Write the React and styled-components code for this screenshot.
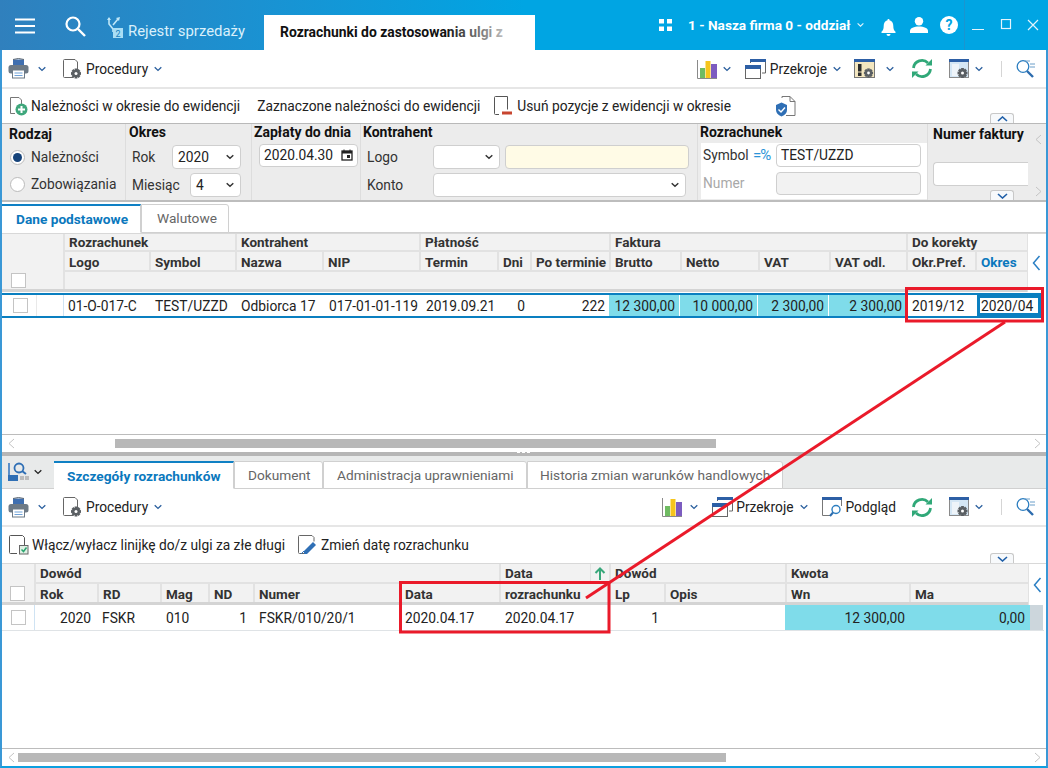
import React from 'react';
import styled, { createGlobalStyle } from 'styled-components';

const Global = createGlobalStyle`
  html, body { margin: 0; padding: 0; background: #fff; }
  body { font-family: Roboto, "Liberation Sans", sans-serif; font-size: 13.75px; color: #222; overflow: hidden; }
  * { box-sizing: border-box; }
`;

const Page = styled.div`
  position: relative; width: 1048px; height: 768px; overflow: hidden; background: #fff;
  display: flex; flex-direction: column;
`;
const TitleBar = styled.header`
  height: 50px; flex: none; display: flex; align-items: flex-end; color: #fff;
  background: linear-gradient(90deg, #3080bd 0%, #1a92d2 25%, #00a5e3 50%, #00a5e3 100%);
`;
const TitleIcon = styled.div`
  height: 50px; display: flex; align-items: center; flex: none;
  margin-left: ${p => p.$ml}px; padding-top: ${p => p.$pt ?? 2}px;
`;
const ModuleName = styled.span`
  height: 50px; width: 117px; flex: none; line-height: 62px; margin-left: 5px; font-size: 14.9px; color: #d9f0fb; white-space: nowrap;
`;
const ActiveTab = styled.div`
  width: 271px; height: 35px; margin-left: 19px; background: #fff; color: #111; font-weight: 700; flex: none;
  padding: 9px 0 0 16px; white-space: nowrap; overflow: hidden; font-size: 13.9px; position: relative;
  &::after { content: ''; position: absolute; right: 0; top: 0; bottom: 0; width: 90px;
    background: linear-gradient(90deg, rgba(255,255,255,0), #fff 90%); }
`;
const Firm = styled.span`
  height: 50px; line-height: 50px; margin-left: 16px; font-weight: 700; font-size: 13.65px; white-space: nowrap; width: 163px; flex: none;
`;
const WinDivider = styled.div`
  width: 1px; height: 50px; background: #1b95cf; margin-left: 6px; flex: none;
`;

const Body = styled.div`
  flex: 1; min-height: 0; display: flex; flex-direction: column;
  border-left: 2px solid #3a98d6; border-right: 2px solid #3a98d6; border-bottom: 2px solid #0ea0e0;
`;
const Toolbar = styled.div`
  height: ${p => p.$h}px; flex: none; display: flex; align-items: center; position: relative;
  padding-left: ${p => p.$pl ?? 6}px; border-bottom: ${p => p.$border ? '2px solid #e6e6e6' : 'none'};
`;
const Tool = styled.div`
  display: flex; align-items: center; flex: none; white-space: nowrap; gap: ${p => p.$gap ?? 4}px;
  margin-left: ${p => p.$ml ?? 0}px; color: #222; font-size: 13.75px;
`;
const Spacer = styled.div` flex: 1; `;
const TrailGap = styled.div` width: 10px; flex: none; `;
const ToolDivider = styled.div` width: 1px; height: 16px; background: #d5d5d5; margin-left: 18px; flex: none; `;
const Collapse = styled.div`
  position: absolute; left: 988px; bottom: 0;
  width: 24px; height: 10px; background: #f7f9fb; border: 1px solid #c8c8c8; border-bottom: none; border-radius: 3px 3px 0 0;
  display: flex; align-items: center; justify-content: center; z-index: 2;
`;

const Filters = styled.section`
  height: 79px; flex: none; background: #ececec; display: flex; position: relative;
  border-top: 1px solid #b9b9b9; border-bottom: 2px solid #bdbdbd;
`;
const FilterGroup = styled.div`
  width: ${p => p.$w}px; flex: none; position: relative; padding-left: ${p => p.$pl ?? 3}px;
  border-right: ${p => p.$last ? 'none' : '1px solid #dddddd'}; height: 76px;
`;
const GroupTitle = styled.div`
  font-weight: 700; font-size: 14px; color: #111; height: 17px; line-height: 17px; margin-top: ${p => p.$mt ?? 0}px; white-space: nowrap;
`;
const FormRow = styled.div`
  display: flex; align-items: center; height: 24px; margin-top: ${p => p.$mt ?? 0}px; padding-left: ${p => p.$pl ?? 0}px; white-space: nowrap;
  color: ${p => p.$dim ? '#a8a8a8' : '#333'};
`;
const RowLabel = styled.span` width: ${p => p.$w}px; flex: none; `;
const Radio = styled.span`
  width: 15px; height: 15px; border-radius: 50%; border: 1px solid #bbb; background: #fff; flex: none; margin-right: 6px; display: flex; align-items: center; justify-content: center;
  &::after { content: ''; width: 9px; height: 9px; border-radius: 50%; background: ${p => p.$on ? '#16437a' : 'transparent'}; }
`;
const Select = styled.div`
  width: ${p => p.$w}px; height: 24px; flex: none; background: #fff; border: 1px solid #cfcfcf; border-radius: 4px;
  padding: 0 6px 0 5px; display: flex; align-items: center; justify-content: space-between; color: #222; margin-left: ${p => p.$ml ?? 0}px;
`;
const Input = styled.div`
  width: ${p => p.$w}px; height: ${p => p.$h ?? 24}px; flex: none; background: ${p => p.$bg || '#fff'}; border: 1px solid #cfcfcf; border-radius: 4px;
  padding: 0 4px; display: flex; align-items: center; justify-content: space-between; color: #222; margin-left: ${p => p.$ml ?? 0}px;
  ${p => p.$open && 'border-right: none; border-radius: 4px 0 0 4px;'}
`;
const SymbolPanel = styled.div`
  background: #fff; width: 226px; height: 56px; margin-left: 1px; margin-top: 2px; padding-left: 2px;
`;
const PercentMark = styled.span`
  color: #2b94d8; font-size: 15px; width: 23px; margin-left: 3px; letter-spacing: -1px; flex: none;
`;
const SideArrows = styled.div`
  flex: 1; display: flex; flex-direction: column; justify-content: space-between; align-items: center; padding: 10px 0 3px 2px; background: #ececec;
`;

const TabStrip = styled.div`
  height: ${p => p.$h}px; flex: none; display: flex; align-items: flex-end; background: ${p => p.$bg || '#fff'};
  border-bottom: 1px solid #d0d0d0;
`;
const TabItem = styled.div`
  width: ${p => p.$w}px; flex: none; height: ${p => p.$hh ?? 29}px; margin-bottom: -1px; background: #fff; border: 1px solid #d0d0d0; border-left: ${p => p.$active ? 'none' : '1px solid #d0d0d0'};
  border-top: ${p => p.$active ? '2px solid #0f80c4' : '1px solid #d0d0d0'};
  border-bottom: ${p => p.$active ? '1px solid #fff' : '1px solid #d0d0d0'}; border-radius: ${p => p.$active ? '0' : '0 3px 0 0'};
  font-size: 13.7px; padding-left: ${p => p.$pl}px; line-height: 26px; white-space: nowrap;
  color: ${p => p.$active ? '#0a78bd' : '#666'}; font-weight: ${p => p.$active ? 700 : 400};
`;
const ViewPicker = styled.div`
  width: 52px; height: 28px; flex: none; align-self: center; display: flex; align-items: center; gap: 4px; padding-left: 6px;
`;

const Grid = styled.div` display: flex; flex: none; border-top: 1px solid #d8d8d8; `;
const GridMain = styled.div` width: ${p => p.$w}px; flex: none; background: #f2f2f2; `;
const GridSide = styled.div`
  flex: 1; border-left: 1px solid #e2e2e2; display: flex; align-items: center; justify-content: center; padding-right: 1px;
`;
const HeadRow = styled.div`
  display: grid; grid-template-columns: ${p => p.$cols}; height: ${p => p.$h}px;
  ${p => p.$thick && 'border-bottom: 3px solid #d4d4d4;'}
`;
const HeadCell = styled.div`
  grid-column: ${p => p.$span ? `span ${p.$span}` : 'auto'};
  border-left: ${p => p.$blank ? 'none' : '2px solid #e2e2e2'};
  border-bottom: ${p => p.$flat ? 'none' : '2px solid #e2e2e2'};
  padding-left: ${p => p.$pl ?? 4}px; padding-top: ${p => p.$pt ?? 0}px; font-weight: 700; font-size: 13.5px;
  color: ${p => p.$blue ? '#0a78bd' : '#333'}; white-space: nowrap; overflow: hidden; display: flex; align-items: center; justify-content: space-between;
`;
const ColHead = styled(HeadCell).attrs({ $pt: 2 })``;
const ColHeadFlat = styled(HeadCell).attrs({ $pt: 2, $flat: true })`
  border-bottom: none;
`;
const SortBox = styled.span`
  width: 19px; align-self: stretch; flex: none; border-left: 1px solid #e2e2e2; display: flex; align-items: center; justify-content: center;
`;
const CheckBox = styled.span`
  display: block; width: 15px; height: 15px; border: 1px solid #c4c4c4; background: #fff; flex: none;
`;
const Row = styled.div`
  display: grid; grid-template-columns: ${p => p.$cols}; height: ${p => p.$h}px; flex: none; width: 1042px;
  border-top: ${p => p.$top}; border-bottom: ${p => p.$bottom}; margin-top: ${p => p.$mt ?? 0}px; background: #fff;
`;
const Cell = styled.div`
  display: flex; align-items: center; white-space: nowrap; padding: 0 ${p => p.$pr ?? 4}px 0 ${p => p.$pl ?? 5}px;
  justify-content: ${p => p.$right ? 'flex-end' : 'flex-start'};
  background: ${p => p.$bg || 'transparent'}; color: #222; font-size: 13.8px;
  ${p => p.$sep && `border-left: 1px solid ${p.$sep};`}
  ${p => p.$gap && 'border-right: 1px solid #fff;'}
`;
const FocusCell = styled(Cell)` box-shadow: inset 0 0 0 3px #0a7fc0; padding-left: 4px; margin: 0 2px; `;
const Blank = styled.div` height: ${p => p.$h}px; flex: none; `;

const HScroll = styled.div`
  height: 18px; flex: none; border-top: 1px solid #bcbcbc; display: flex; align-items: center; justify-content: space-between; padding: 0 5px 0 6px; position: relative;
`;
const Thumb = styled.div`
  position: absolute; left: ${p => p.$l}px; width: ${p => p.$w}px; top: 4px; height: 9px; background: #b8b8b8;
`;
const Splitter = styled.div`
  height: 4px; flex: none; background: #b6b6b6; position: relative;
  &::after { content: ''; position: absolute; left: 515px; top: 0; width: 13px; height: 1px; background: repeating-linear-gradient(90deg, #fff 0 3px, transparent 3px 5px); }
`;
const Overlay = styled.svg`
  position: absolute; left: 0; top: 0; width: 1048px; height: 768px; pointer-events: none; z-index: 5;
`;

/* ---- icons ---- */
const Chev = ({ c = '#2a5f9e', w = 8 }) => (
  <svg width={w} height="6" viewBox="0 0 8 6" fill="none"><path d="M.7 1.2 4 4.4l3.3-3.2" stroke={c} strokeWidth="1.3" /></svg>
);
const ChevSel = () => <svg width="8" height="6" viewBox="0 0 8 6" fill="none"><path d="M.7 1.2 4 4.2l3.3-3" stroke="#333" strokeWidth="1.5" /></svg>;
const ChevUp = () => <svg width="11" height="6" viewBox="0 0 11 6" fill="none"><path d="M1 5 5.5 1 10 5" stroke="#1f5fa8" strokeWidth="1.6" /></svg>;
const ChevDown = () => <svg width="11" height="6" viewBox="0 0 11 6" fill="none"><path d="M1 1 5.5 5 10 1" stroke="#1f5fa8" strokeWidth="1.6" /></svg>;
const SideChev = () => <svg width="9" height="16" viewBox="0 0 9 16" fill="none"><path d="M7.500 1 1.500 8l6 7" stroke="#2a7fc4" strokeWidth="1.5" /></svg>;
const Thin = ({ left }) => <svg width="7" height="11" viewBox="0 0 7 11" fill="none"><path d={left ? 'M6 1 1 5.500 6 10' : 'M1 1 6 5.500 1 10'} stroke="#c4c4c4" strokeWidth="1" /></svg>;

const Printer = () => (
  <svg width="21" height="21" viewBox="0 0 21 21">
    <path d="M5 1.500h11v7H5z" fill="#3f6fb0" />
    <path d="M5 1.500q5.500-2 11 0" stroke="#5a6570" fill="none" />
    <rect x="0.500" y="7" width="20" height="8.500" rx="2.500" fill="#6d7a86" />
    <rect x="4.500" y="12" width="12" height="8" fill="#fff" stroke="#6d7a86" />
    <path d="M6.500 15h8M6.500 17.500h8" stroke="#6fa2d8" />
  </svg>
);
const Gear = ({ x, y, r = 5, c = '#5a5f63' }) => (
  <g transform={`translate(${x} ${y})`}>
    {[0, 45, 90, 135].map(a => <rect key={a} x={-r * 0.28} y={-r} width={r * 0.56} height={r * 2} fill={c} transform={`rotate(${a})`} />)}
    <circle r={r * 0.72} fill={c} /><circle r={r * 0.3} fill="#fff" />
  </g>
);
const DocGear = () => (
  <svg width="19" height="20" viewBox="0 0 19 20">
    <path d="M10 18.500H1.500a1 1 0 0 1-1-1V1.500a1 1 0 0 1 1-1H12l2.500 2.500v8" fill="#fff" stroke="#666" />
    <Gear x={13} y={14.5} r={5} />
  </svg>
);
const Bars = () => (
  <svg width="21" height="20" viewBox="0 0 21 20">
    <path d="M.5 1v18.500H20" stroke="#8a8a8a" fill="none" />
    <rect x="3" y="9" width="5" height="10" fill="#6fbb62" /><rect x="8.500" y="2" width="5" height="17" fill="#f6c51c" /><rect x="14" y="5" width="6" height="14" fill="#7c5cc0" />
  </svg>
);
const Windows = () => (
  <svg width="21" height="20" viewBox="0 0 21 20">
    <path d="M5.500 4V.5h15V14h-3.500" fill="#fff" stroke="#666" /><rect x="5" y="0" width="16" height="3" fill="#2d5fa5" />
    <rect x=".5" y="6.500" width="15" height="13" fill="#fff" stroke="#666" /><rect x="0" y="6" width="16" height="4" fill="#2d5fa5" />
  </svg>
);
const WarnGear = () => (
  <svg width="21" height="20" viewBox="0 0 21 20">
    <rect x=".5" y=".5" width="20" height="18" fill="#f3e6bf" stroke="#777" /><rect x="0" y="0" width="21" height="3" fill="#2d5fa5" />
    <rect x="4" y="5" width="3.500" height="7.500" fill="#2b2b2b" /><rect x="4" y="13.500" width="3.500" height="3.500" fill="#2b2b2b" />
    <Gear x={14.5} y={14} r={4.6} />
  </svg>
);
const Refresh = () => (
  <svg width="22" height="21" viewBox="0 0 22 21" fill="none">
    <path d="M2.500 10a8.500 8.500 0 0 1 14.500-5" stroke="#30a878" strokeWidth="2.800" /><path d="M21 1v6.500h-6.500z" fill="#30a878" />
    <path d="M19.500 11a8.500 8.500 0 0 1-14.500 5" stroke="#30a878" strokeWidth="2.800" /><path d="M1 20v-6.500h6.500z" fill="#30a878" />
  </svg>
);
const WinGear = () => (
  <svg width="20" height="20" viewBox="0 0 20 20">
    <rect x=".5" y=".5" width="19" height="18" fill="#d5e7f5" stroke="#8a8a8a" /><rect x="0" y="0" width="20" height="3" fill="#2d5fa5" />
    <rect x="3" y="5" width="7" height="12" fill="#eef4f9" /><Gear x={13.5} y={14} r={5} />
  </svg>
);
const SearchList = () => (
  <svg width="20" height="20" viewBox="0 0 20 20" fill="none">
    <circle cx="7" cy="7.500" r="5.800" stroke="#2c7ec0" strokeWidth="1.300" /><path d="m11 12 6 6" stroke="#2c6cae" strokeWidth="2.400" />
    <path d="M9 2h5M14 5h5M14 8h5" stroke="#6a9ec9" />
  </svg>
);
const DocPlus = () => (
  <svg width="19" height="20" viewBox="0 0 19 20">
    <path d="M6 17.500H1.500v-16H10l2.500 2.500v5" fill="#fff" stroke="#777" />
    <circle cx="12.500" cy="13.500" r="6" fill="#3fa77c" /><path d="M12.500 10v7M9 13.500h7" stroke="#fff" strokeWidth="2" />
  </svg>
);
const DocRed = () => (
  <svg width="18" height="20" viewBox="0 0 18 20">
    <path d="M5 18.500H1.500a1 1 0 0 1-1-1V1.500a1 1 0 0 1 1-1h12v13" fill="#fff" stroke="#555" />
    <rect x="8" y="15.500" width="10" height="3" fill="#c8452f" />
  </svg>
);
const DocShield = () => (
  <svg width="21" height="21" viewBox="0 0 21 21">
    <path d="M7 2V.5h8l5 5v14H11" fill="#fff" stroke="#777" /><path d="M15 .5v5h5" fill="none" stroke="#777" />
    <path d="M1 9l5.500-2.500L12 9v5q0 4-5.500 6.500Q1 18 1 14z" fill="#2f6fb5" /><path d="m3.500 13.500 2.500 2.500 4-4.500" stroke="#fff" strokeWidth="1.400" fill="none" />
  </svg>
);
const DocCheck = () => (
  <svg width="20" height="20" viewBox="0 0 20 20">
    <path d="M8 18.500H1.500a1 1 0 0 1-1-1v-16a1 1 0 0 1 1-1h12l2 2v8" fill="#fff" stroke="#555" />
    <rect x="10.500" y="10.500" width="8.500" height="8.500" fill="#dff0e4" stroke="#666" /><path d="m12.500 14.500 2 2 3-4" stroke="#2aa56f" strokeWidth="1.500" fill="none" />
  </svg>
);
const DocPen = () => (
  <svg width="20" height="20" viewBox="0 0 20 20">
    <path d="M6 18.500H1.500a1 1 0 0 1-1-1v-16a1 1 0 0 1 1-1H14l2 2v4" fill="#fff" stroke="#666" />
    <path d="m6 16 9-9 3 3-9 9H6z" fill="#2f6fb5" /><path d="m3 19 3-3" stroke="#2f6fb5" />
  </svg>
);
const WinSearch = () => (
  <svg width="21" height="20" viewBox="0 0 21 20" fill="none">
    <path d="M9 18.500H.5V.5h19V9" stroke="#777" /><rect width="20" height="3" fill="#2d5fa5" />
    <circle cx="14" cy="12.500" r="4" fill="#fff" stroke="#2c7ec0" strokeWidth="1.400" /><path d="m11 15.500-3 3.500" stroke="#2c6cae" strokeWidth="2" />
  </svg>
);
const Calendar = () => (
  <svg width="12" height="12" viewBox="0 0 12 12" fill="none">
    <rect x="1" y="2" width="10" height="9" stroke="#222" strokeWidth="1.300" /><rect x="1" y="2" width="10" height="2.500" fill="#222" /><path d="M3 .5v2M9 .5v2" stroke="#222" /><rect x="6" y="6" width="3" height="3" fill="#222" />
  </svg>
);
const Hamburger = () => (
  <svg width="20" height="16" viewBox="0 0 20 16"><path d="M0 1.500h20M0 8h20M0 14.500h20" stroke="#fff" strokeWidth="2" /></svg>
);
const SearchW = () => (
  <svg width="21" height="21" viewBox="0 0 21 21" fill="none"><circle cx="8" cy="8" r="6.500" stroke="#fff" strokeWidth="2.200" /><path d="m13 13 7 7" stroke="#fff" strokeWidth="2.400" /></svg>
);
const Flow = () => (
  <svg width="16" height="22" viewBox="0 0 16 22" fill="none">
    <path d="M2 1v6l4 5v3M11 2 6 8" stroke="#bfe6f7" strokeWidth="1.600" /><path d="m0 3 2-3 2 3zM9 1l4-1-1 4z" fill="#bfe6f7" />
    <rect x="6" y="11" width="10" height="10" fill="#a9def5" /><text x="8.500" y="19.500" fontSize="9" fill="#1a80bd" fontFamily="Roboto">2</text>
  </svg>
);
const Apps = () => (
  <svg width="13" height="12" viewBox="0 0 13 12" fill="#fff"><rect width="5" height="4.500" /><rect x="8" width="5" height="4.500" /><rect y="7.500" width="5" height="4.500" /><rect x="8" y="7.500" width="5" height="4.500" /></svg>
);
const Bell = () => (
  <svg width="15" height="18" viewBox="0 0 15 18" fill="#fff"><path d="M7.500 1a1 1 0 0 1 1 1.200C11 3 12.300 5 12.300 8c0 3 .7 4.300 2.200 5.800V15H.5v-1.200C2 12.300 2.700 11 2.700 8c0-3 1.300-5 3.800-5.800A1 1 0 0 1 7.500 1z" /><path d="M5.500 16h4a2 2 0 0 1-4 0z" /></svg>
);
const UserI = () => (
  <svg width="18" height="16" viewBox="0 0 18 16" fill="#fff"><circle cx="9" cy="4.200" r="4.200" /><path d="M0 16v-2c0-3 4-4.500 9-4.500s9 1.500 9 4.500v2z" /></svg>
);
const Help = () => (
  <svg width="18" height="18" viewBox="0 0 18 18"><circle cx="9" cy="9" r="9" fill="#fff" /><text x="9" y="14" textAnchor="middle" fontSize="14" fontWeight="700" fill="#00a5e3" fontFamily="Roboto">?</text></svg>
);
const WinBtns = () => (
  <svg width="68" height="12" viewBox="0 0 68 12" fill="none" stroke="#e4f4fc">
    <path d="M0 10.500h12" /><rect x="29.500" y="0.500" width="9" height="9" strokeWidth="1.200" /><path d="m56 1 10 10M66 1 56 11" strokeWidth="1.200" />
  </svg>
);
const ViewIcon = () => (
  <svg width="21" height="20" viewBox="0 0 21 20">
    <path d="M1 1v13" stroke="#5a8fc9" strokeWidth="2" /><rect x="0" y="13" width="10" height="6" fill="#2f6fb5" /><rect x="12" y="14" width="4" height="4" fill="#bbb" /><rect x="17" y="14" width="4" height="4" fill="#bbb" />
    <circle cx="11" cy="6" r="4.500" fill="none" stroke="#2f6fb5" strokeWidth="1.800" /><path d="m14 9 4 3" stroke="#2f6fb5" strokeWidth="2" />
  </svg>
);
const UpArrow = () => <svg width="12" height="13" viewBox="0 0 12 13" fill="none"><path d="M6 13V2M1.500 6 6 1.500 10.500 6" stroke="#37a77a" strokeWidth="2" /></svg>;

/* ---- grids ---- */
const topCols = '34px 27px 86px 86px 87px 97px 78px 33px 79px 71px 78px 71px 77px 69px 52px';
const topRowCols = '34px 27px 86px 86px 87px 97px 78px 33px 79px 71px 78px 71px 77px 69px 68px';
const lowCols = '32px 63px 63px 48px 45px 146px 100px 110px 55px 121px 124px 119px';
const lowRowCols = '32px 63px 63px 48px 45px 146px 100px 110px 55px 121px 124px 121px 13px';

const RightTools = ({ lower }) => lower ? (
  <>
    <Tool><Bars /></Tool><Tool $ml={7}><Chev /></Tool>
    <Tool $ml={14} $gap={3}><Windows /><span>Przekroje</span></Tool><Tool $ml={6}><Chev /></Tool>
    <Tool $ml={14} $gap={3}><WinSearch /><span>Podgląd</span></Tool>
    <Tool $ml={15}><Refresh /></Tool>
    <Tool $ml={16}><WinGear /></Tool><Tool $ml={6}><Chev /></Tool>
    <ToolDivider /><Tool $ml={14}><SearchList /></Tool>
  </>
) : (
  <>
    <Tool><Bars /></Tool><Tool $ml={5}><Chev /></Tool>
    <Tool $ml={14}><Windows /><span>Przekroje</span></Tool><Tool $ml={6}><Chev /></Tool>
    <Tool $ml={13}><WarnGear /></Tool><Tool $ml={11}><Chev /></Tool>
    <Tool $ml={17}><Refresh /></Tool>
    <Tool $ml={16}><WinGear /></Tool><Tool $ml={6}><Chev /></Tool>
    <ToolDivider /><Tool $ml={14}><SearchList /></Tool>
  </>
);

const MainBar = ({ lower }) => (
  <Toolbar $h={lower ? 38 : 39} $border>
    <Tool><Printer /></Tool><Tool $ml={9}><Chev /></Tool>
    <Tool $ml={17}><DocGear /><span>Procedury</span></Tool><Tool $ml={6}><Chev /></Tool>
    <Spacer /><RightTools lower={lower} /><TrailGap />
  </Toolbar>
);

export default function App() {
  return (
    <Page>
      <Global />
      <TitleBar>
        <TitleIcon $ml={15}><Hamburger /></TitleIcon>
        <TitleIcon $ml={30}><SearchW /></TitleIcon>
        <TitleIcon $ml={21} $pt={6}><Flow /></TitleIcon>
        <ModuleName>Rejestr sprzedaży</ModuleName>
        <ActiveTab>Rozrachunki do zastosowania ulgi z</ActiveTab>
        <TitleIcon $ml={124} $pt={0}><Apps /></TitleIcon>
        <Firm>1 - Nasza firma 0 - oddział</Firm>
        <TitleIcon $ml={6} $pt={0}><Chev c="#e4f4fc" w={7} /></TitleIcon>
        <TitleIcon $ml={17} $pt={4}><Bell /></TitleIcon>
        <TitleIcon $ml={14} $pt={0}><UserI /></TitleIcon>
        <TitleIcon $ml={12} $pt={0}><Help /></TitleIcon>
        <WinDivider />
        <TitleIcon $ml={7} $pt={0}><WinBtns /></TitleIcon>
      </TitleBar>
      <Body>
        <MainBar />
        <Toolbar $h={34} $pl={7}>
          <Tool $gap={3}><DocPlus /><span>Należności w okresie do ewidencji</span></Tool>
          <Tool $ml={17}><span>Zaznaczone należności do ewidencji</span></Tool>
          <Tool $ml={14} $gap={5}><DocRed /><span>Usuń pozycje z ewidencji w okresie</span></Tool>
          <Tool $ml={44}><DocShield /></Tool>
          <Collapse><ChevUp /></Collapse>
        </Toolbar>
        <Filters>
          <FilterGroup $w={124} $pl={7}>
            <GroupTitle $mt={2}>Rodzaj</GroupTitle>
            <FormRow $mt={2} $pl={1}><Radio $on /><span>Należności</span></FormRow>
            <FormRow $mt={3} $pl={1}><Radio /><span>Zobowiązania</span></FormRow>
          </FilterGroup>
          <FilterGroup $w={126}>
            <GroupTitle>Okres</GroupTitle>
            <FormRow $mt={4} $pl={3}><RowLabel $w={40}>Rok</RowLabel><Select $w={69}>2020<ChevSel /></Select></FormRow>
            <FormRow $mt={4} $pl={3}><RowLabel $w={58}>Miesiąc</RowLabel><Select $w={51}>4<ChevSel /></Select></FormRow>
          </FilterGroup>
          <FilterGroup $w={109} $pl={2}>
            <GroupTitle>Zapłaty do dnia</GroupTitle>
            <FormRow $mt={2} $pl={5}><Input $w={99} $h={23}>2020.04.30<Calendar /></Input></FormRow>
          </FilterGroup>
          <FilterGroup $w={337} $pl={2}>
            <GroupTitle>Kontrahent</GroupTitle>
            <FormRow $mt={4} $pl={4}><RowLabel $w={66}>Logo</RowLabel><Select $w={67}><span /><ChevSel /></Select><Input $w={184} $ml={5} $bg="#fffbe6" /></FormRow>
            <FormRow $mt={4} $pl={4}><RowLabel $w={66}>Konto</RowLabel><Select $w={253}><span /><ChevSel /></Select></FormRow>
          </FilterGroup>
          <FilterGroup $w={230} $pl={2}>
            <GroupTitle>Rozrachunek</GroupTitle>
            <SymbolPanel>
              <FormRow><RowLabel $w={47}>Symbol</RowLabel><PercentMark>=%</PercentMark><Input $w={145} $h={23}>TEST/UZZD</Input></FormRow>
              <FormRow $mt={4} $dim><RowLabel $w={73}>Numer</RowLabel><Input $w={145} $h={23} $bg="#f2f2f2" /></FormRow>
            </SymbolPanel>
          </FilterGroup>
          <FilterGroup $w={100} $pl={5} $last>
            <GroupTitle $mt={2}>Numer faktury</GroupTitle>
            <FormRow $mt={19}><Input $w={95} $open /></FormRow>
          </FilterGroup>
          <SideArrows><Thin left /><Thin /></SideArrows>
          <Collapse><ChevDown /></Collapse>
        </Filters>
        <TabStrip $h={31}>
          <TabItem $active $w={139} $pl={14}>Dane podstawowe</TabItem>
          <TabItem $w={88} $pl={15}>Walutowe</TabItem>
        </TabStrip>
        <Grid>
          <GridMain $w={1025}>
            <HeadRow $cols={topCols} $h={18}>
              <HeadCell $span={2} $blank $flat />
              <HeadCell $span={2}>Rozrachunek</HeadCell>
              <HeadCell $span={2}>Kontrahent</HeadCell>
              <HeadCell $span={3}>Płatność</HeadCell>
              <HeadCell $span={4}>Faktura</HeadCell>
              <HeadCell $span={2}>Do korekty</HeadCell>
            </HeadRow>
            <HeadRow $cols={topCols} $h={20}>
              <HeadCell $span={2} $blank $flat />
              <ColHead>Logo</ColHead><ColHead>Symbol</ColHead><ColHead>Nazwa</ColHead><ColHead>NIP</ColHead>
              <ColHead>Termin</ColHead><ColHead>Dni</ColHead><ColHead>Po terminie</ColHead>
              <ColHead>Brutto</ColHead><ColHead>Netto</ColHead><ColHead>VAT</ColHead><ColHead>VAT odl.</ColHead>
              <ColHead>Okr.Pref.</ColHead><ColHead $blue>Okres</ColHead>
            </HeadRow>
            <HeadRow $cols="61px 1fr" $h={20} $thick>
              <HeadCell $blank $flat $pl={9}><CheckBox /></HeadCell>
              <HeadCell $flat />
            </HeadRow>
          </GridMain>
          <GridSide><SideChev /></GridSide>
        </Grid>
        <Row $cols={topRowCols} $h={25} $mt={1} $top="2px solid #0a7fc0" $bottom="2px solid #0a7fc0">
          <Cell $pl={11} $pr={0}><CheckBox /></Cell>
          <Cell $sep="#e9e9e9" />
          <Cell $sep="#cfe3f3" $pl={4}>01-O-017-C</Cell><Cell $pl={6}>TEST/UZZD</Cell><Cell $pl={6}>Odbiorca 17</Cell><Cell $pl={7}>017-01-01-119</Cell>
          <Cell $pl={7}>2019.09.21</Cell><Cell $right $pr={5}>0</Cell><Cell $right>222</Cell>
          <Cell $right $bg="#7fdcea" $gap>12 300,00</Cell><Cell $right $bg="#7fdcea" $gap>10 000,00</Cell>
          <Cell $right $bg="#7fdcea" $gap>2 300,00</Cell><Cell $right $bg="#7fdcea">2 300,00</Cell>
          <Cell $pl={6}>2019/12</Cell><FocusCell>2020/04</FocusCell>
        </Row>
        <Blank $h={116} />
        <HScroll>
          <Thin left /><Thin />
          <Thumb $l={113} $w={601} />
        </HScroll>
        <Splitter />
        <TabStrip $h={33} $bg="#e8eaea">
          <ViewPicker><ViewIcon /><Chev c="#222" w={10} /></ViewPicker>
          <TabItem $active $w={180} $hh={28} $pl={13}>Szczegóły rozrachunków</TabItem>
          <TabItem $w={89} $hh={28} $pl={13}>Dokument</TabItem>
          <TabItem $w={204} $hh={28} $pl={13}>Administracja uprawnieniami</TabItem>
          <TabItem $w={256} $hh={28} $pl={12}>Historia zmian warunków handlowych</TabItem>
        </TabStrip>
        <MainBar lower />
        <Toolbar $h={36} $pl={7}>
          <Tool $gap={3}><DocCheck /><span>Włącz/wyłacz linijkę do/z ulgi za złe długi</span></Tool>
          <Tool $ml={13} $gap={3}><DocPen /><span>Zmień datę rozrachunku</span></Tool>
          <Collapse><ChevDown /></Collapse>
        </Toolbar>
        <Grid>
          <GridMain $w={1026}>
            <HeadRow $cols={lowCols} $h={20}>
              <HeadCell $blank $flat />
              <HeadCell $span={6}>Dowód</HeadCell>
              <HeadCell>Data<SortBox><UpArrow /></SortBox></HeadCell>
              <HeadCell $span={2}>Dowód</HeadCell>
              <HeadCell $span={2}>Kwota</HeadCell>
            </HeadRow>
            <HeadRow $cols={lowCols} $h={21} $thick>
              <HeadCell $blank $flat $pl={8}><CheckBox /></HeadCell>
              <ColHeadFlat>Rok</ColHeadFlat><ColHeadFlat>RD</ColHeadFlat><ColHeadFlat>Mag</ColHeadFlat><ColHeadFlat>ND</ColHeadFlat>
              <ColHeadFlat>Numer</ColHeadFlat><ColHeadFlat>Data</ColHeadFlat><ColHeadFlat>rozrachunku</ColHeadFlat>
              <ColHeadFlat>Lp</ColHeadFlat><ColHeadFlat>Opis</ColHeadFlat><ColHeadFlat>Wn</ColHeadFlat><ColHeadFlat>Ma</ColHeadFlat>
            </HeadRow>
          </GridMain>
          <GridSide><SideChev /></GridSide>
        </Grid>
        <Row $cols={lowRowCols} $h={26} $top="none" $bottom="1px solid #dfe3e6">
          <Cell $pl={9} $pr={0}><CheckBox /></Cell>
          <Cell $sep="#cfe3f3" $right $pr={6}>2020</Cell><Cell>FSKR</Cell><Cell $pl={6}>010</Cell><Cell $right $pr={6}>1</Cell>
          <Cell $pl={6}>FSKR/010/20/1</Cell><Cell $pl={6}>2020.04.17</Cell><Cell $pl={6}>2020.04.17</Cell>
          <Cell $right $pr={5}>1</Cell><Cell />
          <Cell $right $bg="#7fdcea">12 300,00</Cell><Cell $right $bg="#7fdcea" $pr={5}>0,00</Cell><Cell $bg="#ccd6dc" />
        </Row>
        <Blank $h={117} />
        <HScroll>
          <Thin left /><Thin />
          <Thumb $l={16} $w={708} />
        </HScroll>
      </Body>
      <Overlay viewBox="0 0 1048 768" fill="none">
        <rect x="906.500" y="288.500" width="136" height="32.500" stroke="#ea1a2a" strokeWidth="3" />
        <rect x="400.500" y="582.500" width="208.500" height="49.500" stroke="#ea1a2a" strokeWidth="3" />
        <path d="M1005 322 586 598" stroke="#ea1a2a" strokeWidth="3" />
      </Overlay>
    </Page>
  );
}
